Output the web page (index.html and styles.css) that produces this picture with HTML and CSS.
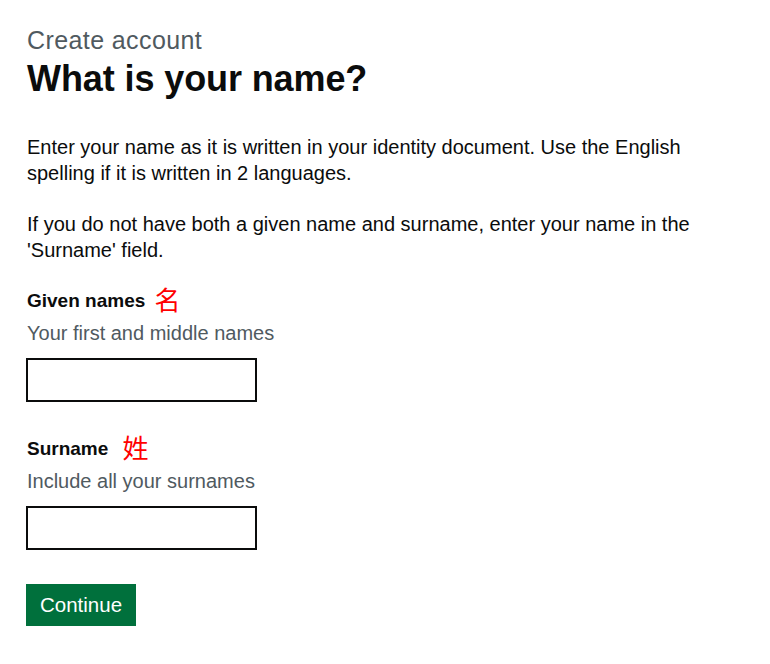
FILE: index.html
```html
<!DOCTYPE html>
<html lang="en">
<head>
<meta charset="utf-8">
<title>What is your name?</title>
<link rel="stylesheet" href="styles.css">
</head>
<body>
<main class="page">
  <span class="caption">Create account</span>
  <h1 class="heading">What is your name?</h1>
  <p class="body">Enter your name as it is written in your identity document. Use the English spelling if it is written in 2 languages.</p>
  <p class="body body-last">If you do not have both a given name and surname, enter your name in the 'Surname' field.</p>
  <div class="field">
    <label class="label" for="given">Given names <span class="cjk">名</span></label>
    <div class="hint">Your first and middle names</div>
    <input class="input" id="given" type="text">
  </div>
  <div class="field">
    <label class="label" for="surname">Surname <span class="cjk cjk-wide">姓</span></label>
    <div class="hint">Include all your surnames</div>
    <input class="input" id="surname" type="text">
  </div>
  <button class="button" type="submit">Continue</button>
</main>
</body>
</html>
```
FILE: styles.css
```css
html, body {
  margin: 0;
  padding: 0;
  background: #ffffff;
}
.page {
  padding: 26px 26px 0;
  font-family: "Liberation Sans", Arial, sans-serif;
  color: #0b0c0c;
  display: flex;
  flex-direction: column;
  align-items: flex-start;
}
.caption {
  margin-left: 1px;
  font-size: 25px;
  line-height: 28px;
  letter-spacing: 0.4px;
  color: #505a5f;
}
.heading {
  margin: 3px 0 33px 1px;
  font-size: 36px;
  line-height: 44px;
  font-weight: 700;
  letter-spacing: -0.1px;
}
.body {
  margin: 0 0 25px 1px;
  font-size: 20px;
  line-height: 26px;
  max-width: 690px;
}
.body-last {
  margin-bottom: 23px;
}
.field {
  display: flex;
  flex-direction: column;
  align-items: flex-start;
  margin-bottom: 32px;
}
.label {
  margin-left: 1px;
  font-size: 19px;
  font-weight: 700;
  line-height: 30px;
}
.cjk {
  color: #ff0000;
  font-weight: 400;
  font-size: 26px;
  line-height: 0;
  vertical-align: -3px;
  margin-left: 4px;
  font-family: "Noto Sans CJK SC", sans-serif;
}
.cjk-wide {
  margin-left: 9px;
}
.hint {
  margin: 5px 0 0 1px;
  font-size: 20px;
  line-height: 25px;
  color: #505a5f;
}
.input {
  margin-top: 12px;
  box-sizing: border-box;
  width: 231px;
  height: 44px;
  border: 2px solid #0b0c0c;
  border-radius: 0;
  padding: 5px;
  font-size: 19px;
  background: #ffffff;
}
.button {
  margin-top: 2px;
  background: #00703c;
  color: #ffffff;
  border: 0;
  border-radius: 0;
  box-shadow: 0 2px 0 #002d18;
  font-family: inherit;
  font-size: 20.5px;
  line-height: 26px;
  height: 42px;
  padding: 8px 14px;
}
```
